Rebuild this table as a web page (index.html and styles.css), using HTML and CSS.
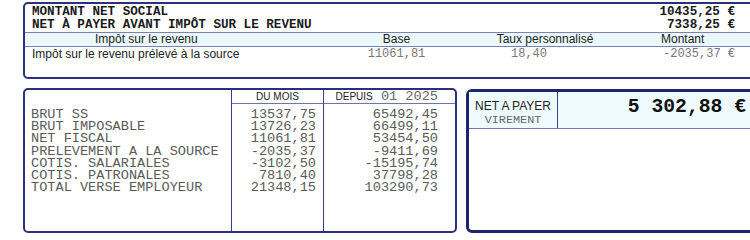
FILE: index.html
```html
<!DOCTYPE html>
<html lang="fr">
<head>
<meta charset="utf-8">
<title>Bulletin - Net à payer</title>
<link rel="stylesheet" href="styles.css">
</head>
<body>
<div class="page">
  <section class="top">
    <div class="sum-row"><span>MONTANT NET SOCIAL</span><span>10435,25 €</span></div>
    <div class="sum-row"><span>NET À PAYER AVANT IMPÔT SUR LE REVENU</span><span>7338,25 €</span></div>
    <div class="ir-head">
      <div class="c1h">Impôt sur le revenu</div>
      <div class="c2">Base</div>
      <div class="c3">Taux personnalisé</div>
      <div class="c4h">Montant</div>
      <div></div>
    </div>
    <div class="ir-row">
      <div class="c1">Impôt sur le revenu prélevé à la source</div>
      <div class="c2 mono">11061,81</div>
      <div class="c3 mono rate">18,40</div>
      <div class="c4 mono">-2035,37 €</div>
      <div></div>
    </div>
  </section>

  <div class="bottom">
    <section class="cumul">
      <div class="col labels">
        <div>BRUT SS</div>
        <div>BRUT IMPOSABLE</div>
        <div>NET FISCAL</div>
        <div>PRELEVEMENT A LA SOURCE</div>
        <div>COTIS. SALARIALES</div>
        <div>COTIS. PATRONALES</div>
        <div>TOTAL VERSE EMPLOYEUR</div>
      </div>
      <div class="col month">
        <div class="col-head center">DU MOIS</div>
        <div class="nums">
          <div>13537,75</div>
          <div>13726,23</div>
          <div>11061,81</div>
          <div>-2035,37</div>
          <div>-3102,50</div>
          <div>7810,40</div>
          <div>21348,15</div>
        </div>
      </div>
      <div class="col year">
        <div class="col-head right">DEPUIS<span class="period">&nbsp;01&nbsp;2025</span></div>
        <div class="nums">
          <div>65492,45</div>
          <div>66499,11</div>
          <div>53454,50</div>
          <div>-9411,69</div>
          <div>-15195,74</div>
          <div>37798,28</div>
          <div>103290,73</div>
        </div>
      </div>
    </section>

    <section class="net">
      <div class="net-head">
        <div class="net-label">
          <div class="nl1">NET A PAYER</div>
          <div class="nl2">VIREMENT</div>
        </div>
        <div class="net-amount">5 302,88 €</div>
      </div>
    </section>
  </div>
</div>
</body>
</html>
```
FILE: styles.css
```css
html, body {
  margin: 0;
  padding: 0;
  background: #ffffff;
  overflow: hidden;
}

.page {
  width: 1000px;
  padding: 2px 0 0 23px;
  font-family: "Liberation Sans", Arial, sans-serif;
  color: #222;
}

/* ---------- top box ---------- */
.top {
  box-sizing: border-box;
  width: 742px;
  height: 77px;
  border: 2px solid #2c2f7c;
  border-radius: 5px;
  padding-top: 2px;
}

.sum-row {
  display: flex;
  justify-content: space-between;
  height: 13px;
  line-height: 13px;
  padding: 0 28px 0 7px;
  font-family: "Liberation Mono", "Courier New", monospace;
  font-weight: bold;
  font-size: 12.6px;
  color: #1a1a1a;
}

.ir-head,
.ir-row {
  display: grid;
  grid-template-columns: 305px 133px 164px 108px 1fr;
  font-size: 12px;
  white-space: nowrap;
}

.ir-head {
  height: 13px;
  line-height: 13px;
  background: #e9f9fd;
  border-top: 1px solid #7c80b4;
  border-bottom: 1px solid #7c80b4;
  color: #222;
}

.ir-row {
  height: 14px;
  line-height: 14px;
  color: #222;
}

.c1h { padding-left: 70px; }
.c1 { padding-left: 7px; }
.c2, .c3 { text-align: center; }
.c4h { padding-left: 34px; }
.c4 { text-align: right; }
.rate { padding-right: 32px; }

.mono {
  font-family: "Liberation Mono", "Courier New", monospace;
  font-size: 12px;
  color: #777;
}

/* ---------- bottom row ---------- */
.bottom {
  display: flex;
  align-items: flex-start;
  gap: 9px;
  margin-top: 9px;
}

.cumul {
  box-sizing: border-box;
  width: 434px;
  height: 145px;
  border: 2px solid #2c2f7c;
  border-radius: 5px;
  display: grid;
  grid-template-columns: 207px 92px 131px;
  font-family: "Liberation Mono", "Courier New", monospace;
  font-size: 13.6px;
  line-height: 12.2px;
  color: #5a5a5a;
}

.col { white-space: nowrap; }

.labels {
  padding: 19px 0 0 6px;
  border-right: 1px solid #3a3d88;
}

.month { border-right: 1px solid #3a3d88; }

.col-head {
  height: 13px;
  line-height: 14px;
  border-bottom: 1px solid #6f73ad;
  font-family: "Liberation Sans", Arial, sans-serif;
  font-size: 10px;
  color: #222;
}

.col-head.center { text-align: center; }
.col-head.right { text-align: right; padding-right: 17px; }

.period {
  font-family: "Liberation Mono", "Courier New", monospace;
  font-size: 13.6px;
  color: #666;
}

.nums {
  padding-top: 5px;
  text-align: right;
}

.month .nums { padding-right: 7px; }
.year .nums { padding-right: 17px; }

/* ---------- net a payer ---------- */
.net {
  box-sizing: border-box;
  width: 310px;
  height: 144px;
  margin-top: 1px;
  border: 3px solid #1f2370;
  border-radius: 6px;
}

.net-head {
  display: flex;
  height: 36px;
  background: #eefcff;
  border-bottom: 1px solid #7478b0;
}

.net-label {
  width: 89px;
  border-right: 1px solid #3a3d88;
  text-align: center;
  padding-top: 7px;
  box-sizing: border-box;
}

.nl1 {
  font-size: 12px;
  line-height: 14px;
  color: #222;
}

.nl2 {
  font-family: "Liberation Mono", "Courier New", monospace;
  font-size: 11.8px;
  line-height: 14px;
  color: #666;
}

.net-amount {
  flex: 1;
  text-align: right;
  padding: 5px 27px 0 0;
  font-family: "Liberation Mono", "Courier New", monospace;
  font-weight: bold;
  font-size: 19.7px;
  line-height: 20px;
  color: #111;
  white-space: nowrap;
}
```
